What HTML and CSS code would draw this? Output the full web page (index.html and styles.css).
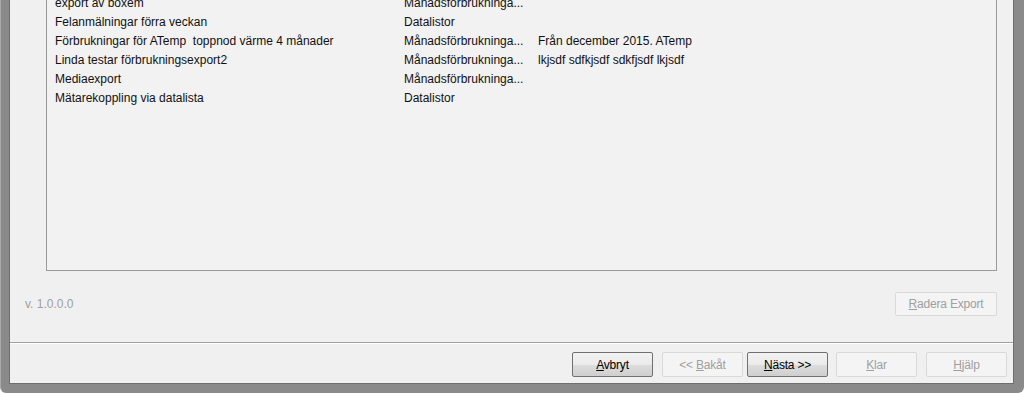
FILE: index.html
```html
<!DOCTYPE html>
<html lang="sv">
<head>
    <meta charset="UTF-8">
    <title>Export</title>
    <link rel="stylesheet" href="styles.css">
</head>
<body>
    <div class="window">
        <div class="client">
            <div class="page">
                <div class="list">
                    <div class="rows">
                        <div class="row"><span class="c1">export av boxem</span><span class="c2">Månadsförbrukninga...</span><span class="c3"></span></div>
                        <div class="row"><span class="c1">Felanmälningar förra veckan</span><span class="c2">Datalistor</span><span class="c3"></span></div>
                        <div class="row"><span class="c1">Förbrukningar för ATemp&nbsp; toppnod värme 4 månader</span><span class="c2">Månadsförbrukninga...</span><span class="c3">Från december 2015. ATemp</span></div>
                        <div class="row"><span class="c1">Linda testar förbrukningsexport2</span><span class="c2">Månadsförbrukninga...</span><span class="c3">lkjsdf sdfkjsdf sdkfjsdf lkjsdf</span></div>
                        <div class="row"><span class="c1">Mediaexport</span><span class="c2">Månadsförbrukninga...</span><span class="c3"></span></div>
                        <div class="row"><span class="c1">Mätarekoppling via datalista</span><span class="c2">Datalistor</span><span class="c3"></span></div>
                    </div>
                </div>
                <div class="info-bar">
                    <span class="version">v. 1.0.0.0</span>
                    <button class="btn disabled wide" disabled><u>R</u>adera Export</button>
                </div>
            </div>
            <div class="separator"></div>
            <div class="wizard-buttons">
                <button class="btn"><u>A</u>vbryt</button>
                <div class="nav-pair">
                    <button class="btn disabled" disabled>&lt;&lt; <u>B</u>akåt</button>
                    <button class="btn"><u>N</u>ästa &gt;&gt;</button>
                </div>
                <button class="btn disabled" disabled><u>K</u>lar</button>
                <button class="btn disabled" disabled><u>H</u>jälp</button>
            </div>
        </div>
    </div>
</body>
</html>
```
FILE: styles.css
```css
body {
    margin: 0;
    background: #fff;
    font-family: "Liberation Sans", Arial, sans-serif;
    font-size: 12px;
    color: #000;
    overflow: hidden;
}
.window {
    height: 393px;
    box-sizing: border-box;
    background: #8a8a8a;
    padding: 0 10px 9px 8px;
    border-radius: 0 0 6px 6px;
    border-left: 1px solid #a9a9a9;
}
.client {
    height: 100%;
    box-sizing: border-box;
    background: #f0f0f0;
    border-left: 1px solid #6e6e6e;
    border-right: 1px solid #6e6e6e;
    border-bottom: 1px solid #6e6e6e;
    display: flex;
    flex-direction: column;
}
.page {
    padding: 0 16px 0 36px;
}
.list {
    height: 271px;
    box-sizing: border-box;
    background: #f2f2f2;
    border: 1px solid #9a9a9a;
    border-top: none;
    overflow: hidden;
}
.rows {
    margin-top: -6px;
    padding-left: 8px;
}
.row {
    display: flex;
    height: 19px;
    line-height: 19px;
    white-space: nowrap;
    color: #111;
}
.c1 {
    width: 349px;
}
.c2 {
    width: 134px;
}
.info-bar {
    display: flex;
    align-items: center;
    justify-content: space-between;
    margin-top: 21px;
}
.version {
    color: #a0a0a0;
    margin-left: -21px;
}
.btn {
    width: 81px;
    height: 25px;
    font-family: inherit;
    font-size: 12px;
    letter-spacing: -0.2px;
    color: #000;
    border: 1px solid #707070;
    border-radius: 2px;
    background: linear-gradient(#f2f2f2, #ebebeb 50%, #dddddd 51%, #cfcfcf);
    padding: 0;
}
.btn.disabled {
    color: #a0a0a0;
    border-color: #d9d9d9;
    background: #f4f4f4;
}
.btn.wide {
    width: 102px;
    height: 24px;
}
.separator {
    margin-top: 26px;
    height: 1px;
    background: #a0a0a0;
    border-bottom: 1px solid #fff;
}
.wizard-buttons {
    display: flex;
    justify-content: flex-end;
    gap: 9px;
    margin-top: 8px;
    padding-right: 6px;
}
.nav-pair {
    display: flex;
    gap: 4px;
    margin-right: -1px;
}
```
